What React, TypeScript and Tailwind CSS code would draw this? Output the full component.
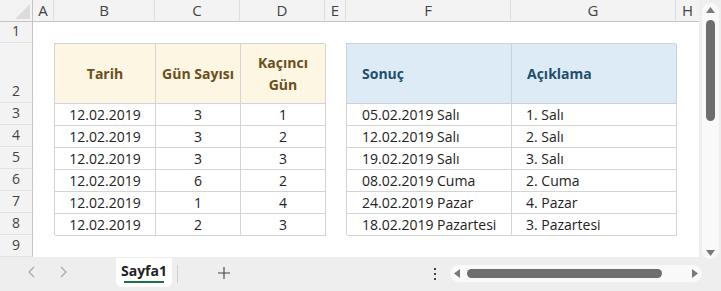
import React from 'react';

// Excel benzeri görünüm: iki tablo, başlıklar, sayfa sekmesi
const leftRows = [
  ['12.02.2019', '3', '1'],
  ['12.02.2019', '3', '2'],
  ['12.02.2019', '3', '3'],
  ['12.02.2019', '6', '2'],
  ['12.02.2019', '1', '4'],
  ['12.02.2019', '2', '3'],
];

const rightRows = [
  ['05.02.2019 Salı', '1. Salı'],
  ['12.02.2019 Salı', '2. Salı'],
  ['19.02.2019 Salı', '3. Salı'],
  ['08.02.2019 Cuma', '2. Cuma'],
  ['24.02.2019 Pazar', '4. Pazar'],
  ['18.02.2019 Pazartesi', '3. Pazartesi'],
];

const colLetters = ['A', 'B', 'C', 'D', 'E', 'F', 'G', 'H'];

const ColHeaders = () => (
  <>
    <div className="relative bg-[#f3f3f3] border-b border-r border-[#c4c4c4]">
      <div className="absolute right-[2px] bottom-[2px] w-0 h-0 border-l-[15px] border-l-transparent border-b-[15px] border-b-[#dcdcdc]"></div>
    </div>
    {colLetters.map((c, i) => (
      <div
        key={c}
        className={`bg-[#f3f3f3] border-b border-[#c4c4c4] flex items-center justify-center text-[15px] text-[#444] ${i < 7 ? 'border-r border-r-[#dedede]' : ''}`}
      >
        {c}
      </div>
    ))}
  </>
);

export default function App() {
  return (
    <div
      className="w-[721px] h-[291px] overflow-hidden bg-[#efeeee] flex flex-col text-[#222]"
      style={{ fontFamily: '"Open Sans", "Noto Sans", sans-serif' }}
    >
      <div className="flex h-[257px]">
        {/* ızgara */}
        <div className="grid w-[699px] bg-white grid-cols-[33px_21px_101px_85px_85px_21px_165px_165px_23px] grid-rows-[22px_21px_60px_22px_22px_22px_22px_22px_22px_22px]">
          <ColHeaders />

          {/* satır numaraları */}
          {[1, 2, 3, 4, 5, 6, 7, 8, 9].map((n) => (
            <div
              key={n}
              className="col-start-1 bg-[#f3f3f3] border-r border-[#c4c4c4] border-b border-b-[#e2e2e2] flex items-end justify-center pb-[1px] text-[14px] text-[#444] leading-[20px]"
              style={{ gridRowStart: n + 1 }}
            >
              {n}
            </div>
          ))}

          {/* sol tablo */}
          <div className="col-start-3 col-span-3 row-start-3 row-span-7 grid grid-cols-[101px_85px_85px] grid-rows-[60px_22px_22px_22px_22px_22px_22px] border-l border-t border-[#d4d4d4] text-[14px]">
            {['Tarih', 'Gün Sayısı', 'Kaçıncı Gün'].map((h, i) => (
              <div
                key={h}
                className={`bg-[#fdf6e2] border-r border-b border-[#d4d4d4] flex items-center justify-center text-center font-bold text-[#6b4f1d] leading-[22px] ${i === 2 ? 'px-5' : ''}`}
              >
                {h}
              </div>
            ))}
            {leftRows.map((r, ri) =>
              r.map((v, ci) => (
                <div key={`${ri}-${ci}`} className="border-r border-b border-[#d4d4d4] flex items-center justify-center">
                  {v}
                </div>
              ))
            )}
          </div>

          {/* sağ tablo */}
          <div className="col-start-7 col-span-2 row-start-3 row-span-7 grid grid-cols-[165px_165px] grid-rows-[60px_22px_22px_22px_22px_22px_22px] border-l border-t border-[#d4d4d4] text-[14px]">
            {['Sonuç', 'Açıklama'].map((h) => (
              <div key={h} className="bg-[#ddebf7] border-r border-b border-[#c8d2dc] flex items-center pl-[15px] font-bold text-[#1f4e6c]">
                {h}
              </div>
            ))}
            {rightRows.map((r, ri) =>
              r.map((v, ci) => (
                <div key={`${ri}-${ci}`} className={`border-r border-b border-[#d4d4d4] flex items-center ${ci === 0 ? 'pl-[15px]' : 'pl-[14px]'}`}>
                  {v}
                </div>
              ))
            )}
          </div>
        </div>

        {/* dikey kaydırma çubuğu */}
        <div className="w-[22px] bg-[#efeeee] pt-[3px] pl-[3px] pr-[2px]">
          <div className="h-[256px] rounded-full bg-[#f9f9f9] flex flex-col items-center pt-[4px]">
            <svg width="9" height="6" viewBox="0 0 9 6"><path d="M4.5 0 L9 6 L0 6 Z" fill="#7a7a7a" /></svg>
            <div className="w-[9px] h-[101px] mt-[7px] rounded-full bg-[#6e6e6e]"></div>
            <div className="flex-1"></div>
            <svg className="mb-[3px]" width="9" height="6" viewBox="0 0 9 6"><path d="M0 0 L9 0 L4.5 6 Z" fill="#7a7a7a" /></svg>
          </div>
        </div>
      </div>

      {/* sekme çubuğu */}
      <div className="flex-1 flex items-start relative">
        <div className="w-[116px] h-[30px] flex items-center">
          <svg className="ml-[28px]" width="7" height="12" viewBox="0 0 7 12">
            <path d="M6 1 L1 6 L6 11" fill="none" stroke="#a8a8a8" strokeWidth="1.2" />
          </svg>
          <svg className="ml-[25px]" width="7" height="12" viewBox="0 0 7 12">
            <path d="M1 1 L6 6 L1 11" fill="none" stroke="#a8a8a8" strokeWidth="1.2" />
          </svg>
        </div>
        <div className="w-[56px] h-[29px] mt-[1px] bg-white rounded-b-md flex flex-col items-center justify-center">
          <span className="text-[14px] font-bold text-[#222] leading-[18px]">Sayfa1</span>
          <div className="w-[40px] h-[2px] bg-[#1e7145] mt-[1px]"></div>
        </div>
        <div className="w-px h-[18px] bg-[#cfcfcf] mt-[8px] ml-[5px]"></div>
        <svg className="ml-[40px] mt-[10px]" width="12" height="12" viewBox="0 0 12 12">
          <path d="M6 0 V12 M0 6 H12" stroke="#444" strokeWidth="1.1" />
        </svg>

        <div className="absolute left-[434px] top-[11px] flex flex-col gap-[3px]">
          <div className="w-[2px] h-[2px] bg-[#444]"></div>
          <div className="w-[2px] h-[2px] bg-[#444]"></div>
          <div className="w-[2px] h-[2px] bg-[#444]"></div>
        </div>

        {/* yatay kaydırma çubuğu */}
        <div className="absolute left-[450px] top-[8px] w-[252px] h-[17px] rounded-full bg-[#f9f9f9] flex items-center px-[4px]">
          <svg width="6" height="9" viewBox="0 0 6 9"><path d="M6 0 L6 9 L0 4.5 Z" fill="#7a7a7a" /></svg>
          <div className="ml-[7px] w-[195px] h-[9px] rounded-full bg-[#6e6e6e]"></div>
          <div className="flex-1"></div>
          <svg width="6" height="9" viewBox="0 0 6 9"><path d="M0 0 L6 4.5 L0 9 Z" fill="#7a7a7a" /></svg>
        </div>
      </div>
    </div>
  );
}
